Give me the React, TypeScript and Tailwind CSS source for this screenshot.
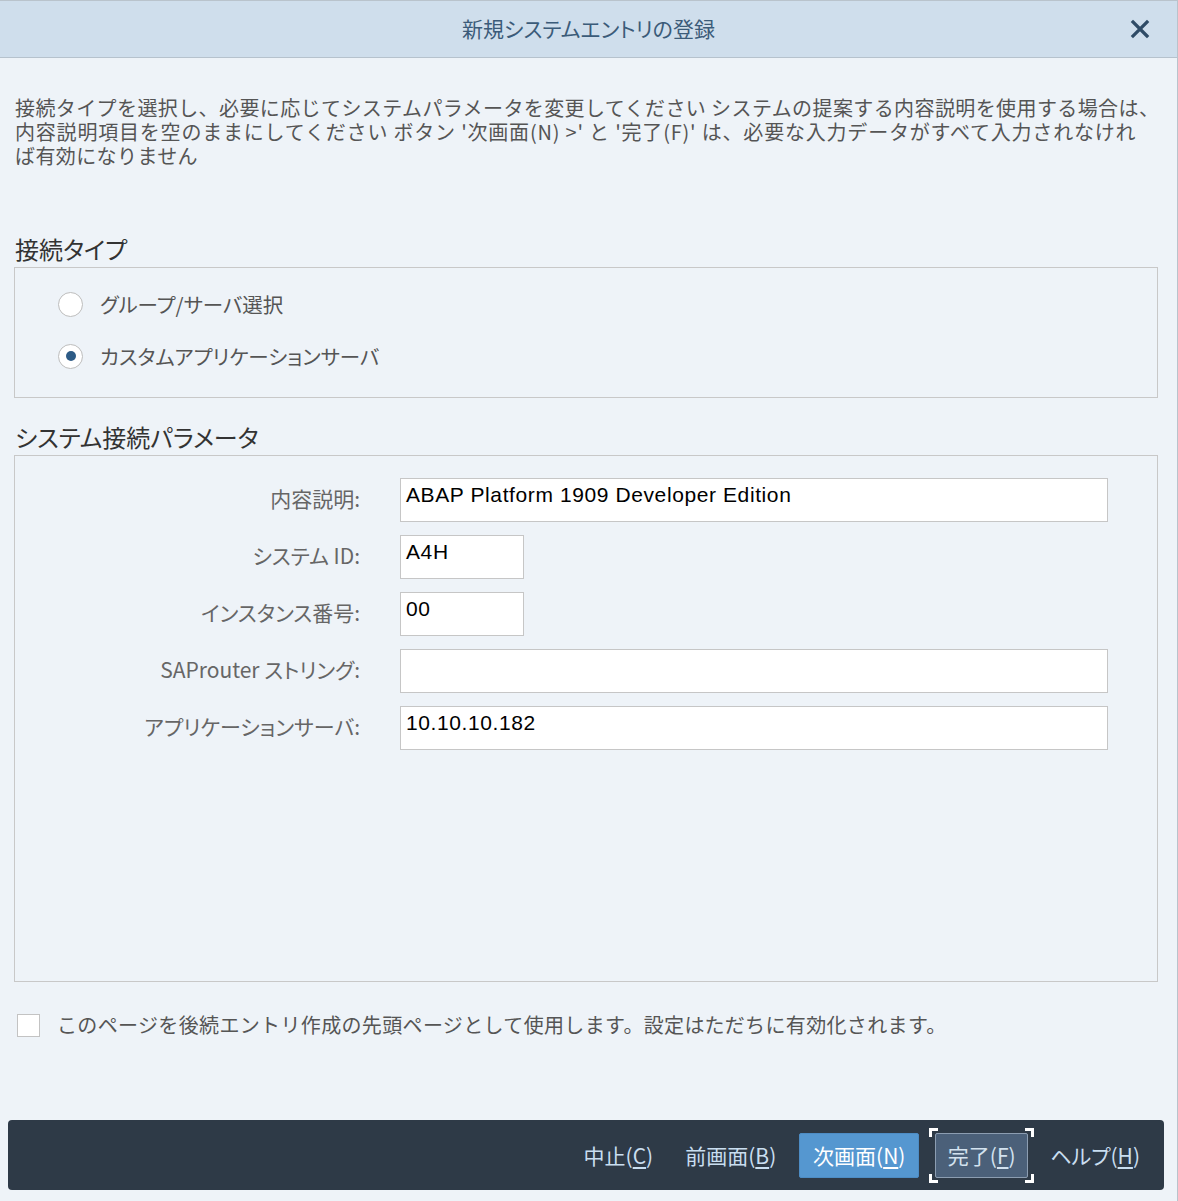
import React from 'react';

const jp = { fontFamily: '"Noto Sans CJK JP", "Noto Sans", sans-serif' };
const latin = { fontFamily: '"Liberation Sans", "Noto Sans CJK JP", sans-serif' };

const Radio: React.FC<{ checked?: boolean; label: string }> = ({ checked, label }) => (
  <div className="flex items-center h-[30px]">
    <div className="w-[25px] h-[25px] rounded-full border border-[#bdbdbd] bg-white flex items-center justify-center shrink-0">
      {checked && <div className="w-[10px] h-[10px] rounded-full bg-[#2d5b86]" />}
    </div>
    <span className="ml-[17px] text-[20.5px] leading-[30px] text-[#555] [font-feature-settings:'palt']">{label}</span>
  </div>
);

const Field: React.FC<{ label: string; value?: string; wide?: boolean }> = ({ label, value, wide }) => (
  <div className="flex items-start h-[44px]">
    <div className="w-[346px] text-right text-[21px] leading-[40px] text-[#666] pr-[1px] [font-feature-settings:'palt']">{label}</div>
    <div
      className={`ml-[39px] h-[44px] bg-white border border-[#c6c6c6] px-[5px] pt-[2px] text-[21px] leading-[28px] tracking-[0.6px] text-black ${wide ? 'w-[708px]' : 'w-[124px]'}`}
      style={latin}
    >
      {value}
    </div>
  </div>
);

const Mn: React.FC<{ pre: string; k: string }> = ({ pre, k }) => (
  <>
    {pre}(<span className="underline underline-offset-[3px]">{k}</span>)
  </>
);

const Corner: React.FC<{ cls: string }> = ({ cls }) => <div className={`absolute w-[9px] h-[9px] border-white ${cls}`} />;

export default function App() {
  return (
    <div className="w-[1178px] h-[1201px] bg-[#eef3f8] border-t border-r border-[#b9c3cc] flex flex-col" style={jp}>
      <div className="relative h-[57px] shrink-0 bg-[#cfdeec] border-b border-[#b6c2cd] flex items-center justify-center">
        <span className="text-[21px] text-[#3b5b79] [font-feature-settings:'palt']">新規システムエントリの登録</span>
        <svg className="absolute right-[27px] top-[18px]" width="20" height="20" viewBox="0 0 20 20">
          <path d="M3 3 L17 17 M17 3 L3 17" stroke="#2f4b66" strokeWidth="3.2" strokeLinecap="square" />
        </svg>
      </div>

      <div className="px-[14px] flex flex-col">
        <div className="mt-[38px] pl-[1px] text-[20px] leading-[24px] text-[#555] whitespace-nowrap">
          <div className="tracking-[0.4px]">接続タイプを選択し、必要に応じてシステムパラメータを変更してください システムの提案する内容説明を使用する場合は、</div>
          <div className="tracking-[0.8px]">内容説明項目を空のままにしてください ボタン '次画面(N) &gt;' と '完了(F)' は、必要な入力データがすべて入力されなけれ</div>
          <div className="tracking-[0.4px]">ば有効になりません</div>
        </div>

        <div className="mt-[66px] pl-[1px] text-[24px] leading-[30px] text-[#333] [font-feature-settings:'palt']">接続タイプ</div>
        <div className="mt-[3px] w-[1144px] h-[131px] border border-[#c8c8c8] pl-[43px] pt-[21px] flex flex-col gap-[22px]">
          <Radio label="グループ/サーバ選択" />
          <Radio checked label="カスタムアプリケーションサーバ" />
        </div>

        <div className="mt-[24px] pl-[1px] text-[24px] leading-[30px] text-[#333] [font-feature-settings:'palt']">システム接続パラメータ</div>
        <div className="mt-[3px] w-[1144px] h-[527px] border border-[#c8c8c8] pt-[22px] flex flex-col gap-[13px]">
          <Field label="内容説明:" value="ABAP Platform 1909 Developer Edition" wide />
          <Field label="システム ID:" value="A4H" />
          <Field label="インスタンス番号:" value="00" />
          <Field label="SAProuter ストリング:" value="" wide />
          <Field label="アプリケーションサーバ:" value="10.10.10.182" wide />
        </div>

        <div className="mt-[28px] flex items-center">
          <div className="ml-[3px] w-[23px] h-[23px] bg-white border border-[#c3c3c3]" />
          <span className="ml-[17px] text-[20px] leading-[30px] text-[#555] tracking-[0.35px]">
            このページを後続エントリ作成の先頭ページとして使用します。設定はただちに有効化されます。
          </span>
        </div>
      </div>

      <div className="mt-[80px] ml-[8px] w-[1156px] h-[70px] bg-[#2e3a47] rounded-[4px] flex items-center justify-end pr-[13px] text-[21px] text-[#c9def0] [font-feature-settings:'palt']">
        <button className="h-[45px] px-[11px] leading-[45px]"><Mn pre="中止" k="C" /></button>
        <button className="ml-[10px] h-[45px] px-[11px] leading-[45px]"><Mn pre="前画面" k="B" /></button>
        <button className="ml-[12px] h-[45px] w-[120px] rounded-[2px] bg-[#5597d0] border border-[#4d8cc4] text-white leading-[43px]">
          <Mn pre="次画面" k="N" />
        </button>
        <div className="relative ml-[16px]">
          <button className="h-[45px] w-[93px] rounded-[2px] bg-[#4b6079] border border-[#8c9db1] leading-[43px] text-[#d3e2ef]">
            <Mn pre="完了" k="F" />
          </button>
          <Corner cls="-left-[6px] -top-[5px] border-l-[3px] border-t-[3px]" />
          <Corner cls="-right-[6px] -top-[5px] border-r-[3px] border-t-[3px]" />
          <Corner cls="-left-[6px] -bottom-[5px] border-l-[3px] border-b-[3px]" />
          <Corner cls="-right-[6px] -bottom-[5px] border-r-[3px] border-b-[3px]" />
        </div>
        <button className="ml-[11px] h-[45px] px-[11px] leading-[45px]"><Mn pre="ヘルプ" k="H" /></button>
      </div>
    </div>
  );
}
